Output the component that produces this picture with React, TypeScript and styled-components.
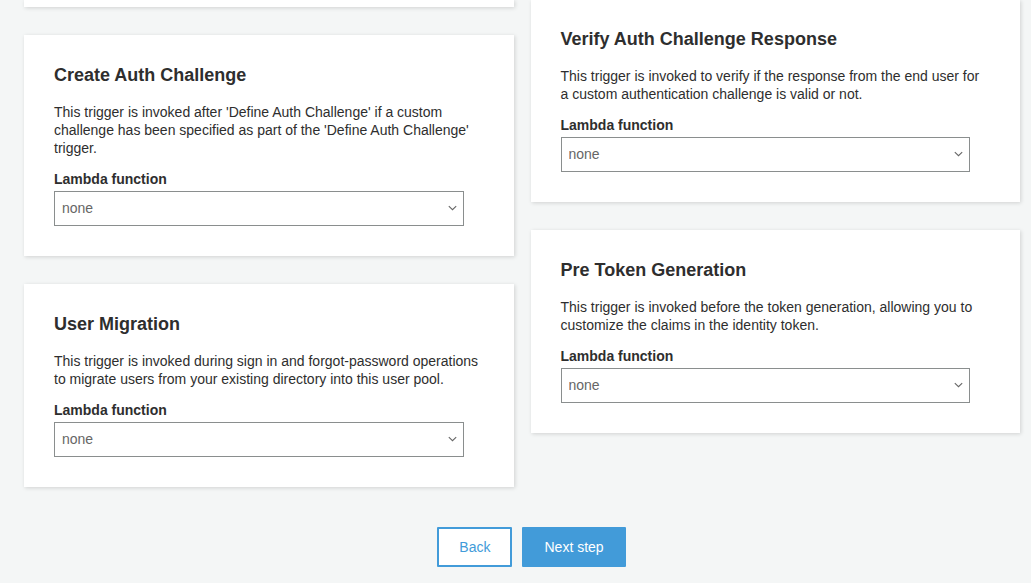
import React, { useId } from 'react';
import styled, { createGlobalStyle } from 'styled-components';

const GlobalStyle = createGlobalStyle`
  *, *::before, *::after { box-sizing: border-box; }
  body {
    margin: 0;
    background: #f4f6f6;
    color: #2e2e2e;
    font: 14px/18px "Liberation Sans", Arial, Helvetica, sans-serif;
  }
`;

const Page = styled.main`
  padding: 0 11px 16px 24px;
`;

const Columns = styled.div`
  display: grid;
  grid-template-columns: 1fr 1fr;
  align-items: start;
  column-gap: 17px;
`;

const Column = styled.div`
  display: flex;
  flex-direction: column;
  gap: 28px;
`;

const Card = styled.section<{ $scrolled?: boolean }>`
  padding: ${(p) => (p.$scrolled ? 29 : 30)}px 30px 30px;
  background: #fff;
  box-shadow: 1px 1px 4px rgba(0, 0, 0, 0.15);
`;

const CardEnd = styled(Card)`
  padding: 7px 0 0;
`;

const Title = styled.h2`
  margin: 0 0 18px;
  font-size: 18px;
  line-height: 20px;
  font-weight: bold;
`;

const Description = styled.p`
  margin: 0 0 13px;
`;

const Label = styled.label`
  display: block;
  margin-bottom: 3px;
  font-weight: bold;
`;

const SelectBox = styled.div`
  display: grid;
  align-items: center;
  margin-right: 20px;
`;

const Select = styled.select`
  grid-area: 1 / 1;
  appearance: none;
  width: 100%;
  height: 35px;
  margin: 0;
  padding: 0 28px 2px 7px;
  border: 1px solid #8a8e8e;
  border-radius: 0;
  background: #fff;
  color: #666;
  font: inherit;
`;

const Chevron = styled.svg`
  grid-area: 1 / 1;
  justify-self: end;
  margin: 0 6px 1px 0;
  pointer-events: none;
`;

const Actions = styled.div`
  display: flex;
  justify-content: center;
  gap: 10px;
  padding: 40px 0 0 19px;
`;

const Button = styled.button<{ $primary?: boolean }>`
  height: 40px;
  padding: 0 20px;
  border: 2px solid #429bd9;
  border-radius: 1px;
  background: ${(p) => (p.$primary ? '#429bd9' : '#fff')};
  color: ${(p) => (p.$primary ? '#fff' : '#429bd9')};
  font: inherit;
  cursor: pointer;
`;

type TriggerProps = {
  title: string;
  description: string;
  scrolled?: boolean;
};

function Trigger({ title, description, scrolled }: TriggerProps) {
  const id = useId();
  return (
    <Card $scrolled={scrolled}>
      <Title>{title}</Title>
      <Description>{description}</Description>
      <Label htmlFor={id}>Lambda function</Label>
      <SelectBox>
        <Select id={id} defaultValue="none">
          <option value="none">none</option>
        </Select>
        <Chevron width="10" height="6" viewBox="0 0 10 6" aria-hidden="true">
          <path d="M.8 1.2 4.5 4.7 8.2 1.2" fill="none" stroke="#666" strokeWidth="1.1" />
        </Chevron>
      </SelectBox>
    </Card>
  );
}

export default function App() {
  return (
    <Page>
      <GlobalStyle />
      <Columns>
        <Column>
          <CardEnd />
          <Trigger
            title="Create Auth Challenge"
            description="This trigger is invoked after 'Define Auth Challenge' if a custom challenge has been specified as part of the 'Define Auth Challenge' trigger."
          />
          <Trigger
            title="User Migration"
            description="This trigger is invoked during sign in and forgot-password operations to migrate users from your existing directory into this user pool."
          />
        </Column>
        <Column>
          <Trigger
            scrolled
            title="Verify Auth Challenge Response"
            description="This trigger is invoked to verify if the response from the end user for a custom authentication challenge is valid or not."
          />
          <Trigger
            title="Pre Token Generation"
            description="This trigger is invoked before the token generation, allowing you to customize the claims in the identity token."
          />
        </Column>
      </Columns>
      <Actions>
        <Button type="button">Back</Button>
        <Button type="button" $primary>Next step</Button>
      </Actions>
    </Page>
  );
}
